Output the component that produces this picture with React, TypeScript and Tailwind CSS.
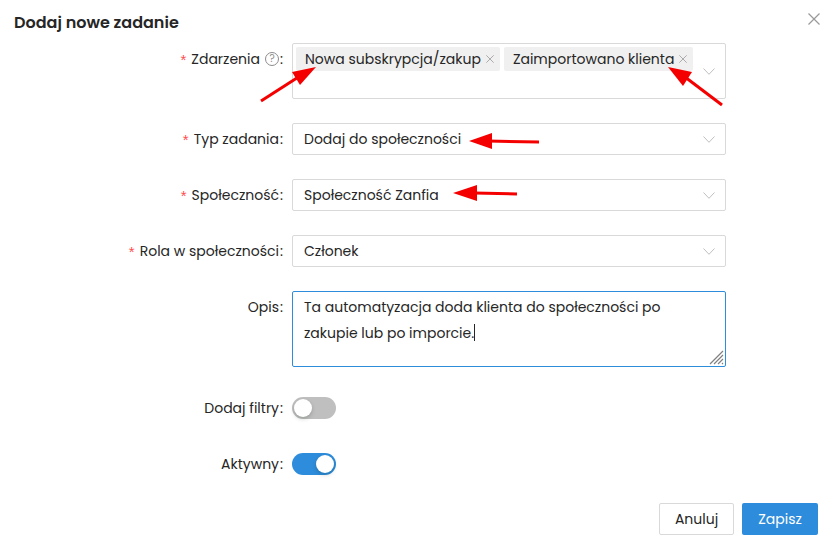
import React from 'react';

const Chevron = ({ className = '' }: { className?: string }) => (
  <svg className={`w-[12px] h-[7px] text-[#bfbfbf] ${className}`} viewBox="0 0 12 7" fill="none" stroke="currentColor" strokeWidth="1">
    <path d="M.5.5 6 6.3 11.5.5" />
  </svg>
);

const Cross = ({ className = '' }: { className?: string }) => (
  <svg className={className} viewBox="0 0 12 12" fill="none" stroke="currentColor" strokeWidth="1.2">
    <path d="M.5.5l11 11M11.5.5l-11 11" />
  </svg>
);

const Label = ({ text, required, children }: { text: string; required?: boolean; children?: React.ReactNode }) => (
  <div className="w-[292px] shrink-0 flex justify-end items-center h-[32px] pr-[9px]">
    {required && <span className="text-[#ff4d4f] mr-[5px] text-[15px] font-['Liberation_Sans'] translate-y-[1px]">*</span>}
    <span>{text}</span>
    {children}
    <span className="ml-[1px] w-[3px]">:</span>
  </div>
);

const Tag = ({ text }: { text: string }) => (
  <span className="h-[24px] flex items-center bg-[#f0f0f0] pl-[9px] pr-[6px] gap-[5px] rounded-[2px]">
    {text}
    <Cross className="w-[8px] h-[8px] text-[#999]" />
  </span>
);

const Select = ({ value }: { value: string }) => (
  <div className="w-[434px] h-[32px] border border-[#d9d9d9] rounded-[2px] flex items-center justify-between pl-[11px] pr-[10px]">
    <span>{value}</span>
    <Chevron />
  </div>
);

const Toggle = ({ on }: { on?: boolean }) => (
  <div className="h-[32px] flex items-center">
    <div className={`w-[44px] h-[22px] rounded-full p-[2px] flex ${on ? 'bg-[#2d8cdb] justify-end' : 'bg-[#bfbfbf] justify-start'}`}>
      <div className="w-[18px] h-[18px] bg-white rounded-full shadow-[0_2px_4px_rgba(0,35,11,0.2)]" />
    </div>
  </div>
);

export default function App() {
  return (
    <div className="w-[839px] h-[549px] bg-white relative overflow-hidden font-['Poppins','Inter','Noto_Sans',sans-serif] text-[14px] text-[#262626]">
      <div className="pl-[14px] pt-[11px] h-[43px] text-[16px] leading-[24px] font-semibold">Dodaj nowe zadanie</div>
      <Cross className="absolute left-[808px] top-[13px] w-[12px] h-[12px] text-[#999]" />
      <div className="flex flex-col">
        <div className="flex mb-[24px]">
          <Label text="Zdarzenia" required>
            <span className="ml-[5px] w-[14px] h-[14px] rounded-full border border-[#8c8c8c] text-[10px] leading-none text-[#8c8c8c] flex items-center justify-center">?</span>
          </Label>
          <div className="w-[434px] h-[56px] border border-[#d9d9d9] rounded-[2px] flex items-start gap-[4px] p-[3px] relative">
            <Tag text="Nowa subskrypcja/zakup" />
            <Tag text="Zaimportowano klienta" />
            <Chevron className="absolute right-[10px] top-[24px]" />
          </div>
        </div>
        <div className="flex mb-[24px]">
          <Label text="Typ zadania" required />
          <Select value="Dodaj do społeczności" />
        </div>
        <div className="flex mb-[24px]">
          <Label text="Społeczność" required />
          <Select value="Społeczność Zanfia" />
        </div>
        <div className="flex mb-[24px]">
          <Label text="Rola w społeczności" required />
          <Select value="Członek" />
        </div>
        <div className="flex mb-[25px]">
          <Label text="Opis" />
          <div className="w-[434px] h-[76px] border border-[#2d8cdb] rounded-[2px] px-[11px] py-[2px] leading-[26px] relative">
            Ta automatyzacja doda klienta do społeczności po zakupie lub po imporcie.
            <span className="inline-block w-px h-[17px] bg-[#262626] align-[-3px]" />
            <svg className="absolute right-[1px] bottom-[1px] w-[15px] h-[15px] text-[#808080]" viewBox="0 0 15 15" fill="none" stroke="currentColor" strokeWidth="1.2">
              <path d="M14 1 1 14M14 5 5 14M14 9l-5 5M14 13l-1 1" />
            </svg>
          </div>
        </div>
        <div className="flex mb-[24px]">
          <Label text="Dodaj filtry" />
          <Toggle />
        </div>
        <div className="flex">
          <Label text="Aktywny" />
          <Toggle on />
        </div>
      </div>
      <div className="absolute right-[21px] top-[503px] flex gap-[8px]">
        <button className="w-[75px] h-[32px] border border-[#d9d9d9] rounded-[2px] bg-white">Anuluj</button>
        <button className="w-[76px] h-[32px] rounded-[2px] bg-[#2d8cdb] text-white">Zapisz</button>
      </div>
      <svg className="absolute left-0 top-0 w-[839px] h-[549px] pointer-events-none" viewBox="0 0 839 549" fill="#f50000" stroke="#f50000">
        <path d="M261 101 300 76" strokeWidth="3" />
        <path d="M316 67 292 72 300 85Z" stroke="none" />
        <path d="M722 105 685 77" strokeWidth="3" />
        <path d="M668 67 692 72 683 86Z" stroke="none" />
        <path d="M539 142 488 141" strokeWidth="3" />
        <path d="M469 141 492 133 492 149Z" stroke="none" />
        <path d="M517 194 474 193" strokeWidth="3" />
        <path d="M453 193 477 185 477 201Z" stroke="none" />
      </svg>
    </div>
  );
}
